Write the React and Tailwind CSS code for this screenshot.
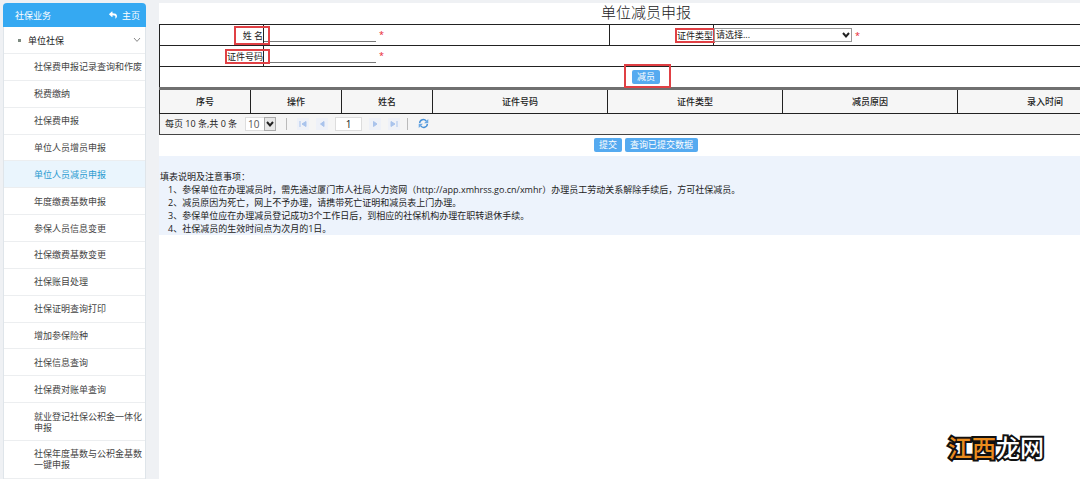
import React, { useState } from 'react';
import { FaReply } from 'react-icons/fa';

const menuItems = [
  '社保费申报记录查询和作废',
  '税费缴纳',
  '社保费申报',
  '单位人员增员申报',
  '单位人员减员申报',
  '年度缴费基数申报',
  '参保人员信息变更',
  '社保缴费基数变更',
  '社保账目处理',
  '社保证明查询打印',
  '增加参保险种',
  '社保信息查询',
  '社保费对账单查询',
  '就业登记社保公积金一体化申报',
  '社保年度基数与公积金基数一键申报',
];

const columns = ['序号', '操作', '姓名', '证件号码', '证件类型', '减员原因', '录入时间'];

const notes = [
  '1、参保单位在办理减员时，需先通过厦门市人社局人力资网（http://app.xmhrss.go.cn/xmhr）办理员工劳动关系解除手续后，方可社保减员。',
  '2、减员原因为死亡，网上不予办理，请携带死亡证明和减员表上门办理。',
  '3、参保单位应在办理减员登记成功3个工作日后，到相应的社保机构办理在职转退休手续。',
  '4、社保减员的生效时间点为次月的1日。',
];

const Chevron = ({ className }) => (
  <svg viewBox="0 0 8 6" className={className} fill="none" stroke="currentColor">
    <path d="M1 1l3 3.4L7 1" />
  </svg>
);

const Star = () => <span className="ml-[3px] text-[#e8202a]">*</span>;

const BlueButton = ({ children }) => (
  <button type="button" className="h-[14px] rounded-xs bg-[#55aaf0] px-[5px] leading-[14px] text-white">
    {children}
  </button>
);

const PageButton = ({ label, children }) => (
  <button type="button" aria-label={label} className="flex h-3 w-3 items-center justify-center bg-[#eef1f8]">
    <svg viewBox="0 0 8 8" className="h-2 w-2" fill="#a9c3ec" stroke="#a9c3ec">
      {children}
    </svg>
  </button>
);

const Sidebar = () => {
  const [active, setActive] = useState(4);

  return (
    <nav className="mt-[3px] ml-[3px] flex w-[143px] shrink-0 flex-col rounded-t-sm border-x border-[#dfe5ea] bg-white">
      <div className="-mx-px flex h-6 shrink-0 items-center justify-between rounded-t-sm bg-[#35a9f2] pr-1.5 pl-3 text-white">
        <span>社保业务</span>
        <a href="#home" className="flex items-center gap-1">
          <FaReply className="h-2 w-2.5" />
          主页
        </a>
      </div>
      <button
        type="button"
        className="flex h-[27px] shrink-0 items-center border-b border-[#eceef0] pr-1 pl-3.5 text-[#222]"
      >
        <span className="mr-[7px] h-[3px] w-[3px] bg-[#7d8a80]" />
        单位社保
        <Chevron className="ml-auto h-1.5 w-2 text-[#888]" />
      </button>
      <ul className="flex grow flex-col text-[#444]">
        {menuItems.map((item, i) => (
          <li key={item} className="flex grow">
            <a
              href="#menu"
              onClick={() => setActive(i)}
              className={
                i === active
                  ? 'flex grow items-center border-b border-[#eceef0] bg-[#eaf5fd] py-[7px] pl-[30px] leading-[11px] text-[#2a9bd0]'
                  : 'flex grow items-center border-b border-[#eceef0] py-[7px] pl-[30px] leading-[11px]'
              }
            >
              {item}
            </a>
          </li>
        ))}
      </ul>
    </nav>
  );
};

const EntryForm = () => (
  <form>
    <table className="w-full table-fixed border-collapse">
      <colgroup>
        <col className="w-[104px]" />
        <col className="w-[346px]" />
        <col className="w-[104px]" />
        <col />
      </colgroup>
      <tbody>
        <tr className="h-[21px]">
          <td className="border border-[#222] text-right">
            <label htmlFor="name" className="relative">
              姓 名
              <span className="absolute -top-[3px] -right-[7px] -bottom-[3px] -left-[9px] border-2 border-[#e04044]" />
            </label>
          </td>
          <td className="border border-[#222]">
            <input id="name" className="h-3 w-28 border-b border-[#777] align-middle outline-none" />
            <Star />
          </td>
          <td className="border border-[#222] text-right">
            <label htmlFor="idType" className="relative">
              证件类型
              <span className="absolute -top-px -right-[2px] -bottom-px -left-[2px] border-2 border-[#e04044]" />
            </label>
          </td>
          <td className="border border-[#222]">
            <div className="flex items-center">
              <div className="relative w-[138px]">
                <select
                  id="idType"
                  className="block h-[14px] w-full appearance-none border border-[#999] bg-white pl-px leading-3"
                >
                  <option>请选择...</option>
                </select>
                <Chevron className="pointer-events-none absolute top-1 right-[2px] h-1.5 w-2 stroke-2" />
              </div>
              <Star />
            </div>
          </td>
        </tr>
        <tr className="h-[21px]">
          <td className="border border-[#222] text-right">
            <label htmlFor="idNumber" className="relative">
              证件号码
              <span className="absolute -top-px -right-[7px] -bottom-px -left-[2px] border-2 border-[#e04044]" />
            </label>
          </td>
          <td colSpan={3} className="border border-[#222]">
            <input id="idNumber" className="h-3 w-28 border-b border-[#777] align-middle outline-none" />
            <Star />
          </td>
        </tr>
        <tr className="h-[21px]">
          <td colSpan={4} className="border border-b-[#707070] border-[#222] text-center">
            <div className="relative inline-block align-middle">
              <BlueButton>减员</BlueButton>
              <span className="pointer-events-none absolute -top-[6px] -right-[11px] -bottom-1 -left-2 border-2 border-[#e04044]" />
            </div>
          </td>
        </tr>
      </tbody>
    </table>
  </form>
);

const Pager = () => (
  <div className="flex h-[21px] items-center border-x border-b border-[#444] bg-[#f5f5f5] pl-[5px]">
    <span className="w-20">每页 10 条,共 0 条</span>
    <div className="relative">
      <select
        aria-label="每页条数"
        className="block h-[14px] w-[31px] appearance-none border border-[#ddd] bg-white pl-0.5 text-[10px] leading-3 text-[#555]"
      >
        <option>10</option>
      </select>
      <span className="pointer-events-none absolute top-0 right-0 flex h-[14px] w-3 items-center justify-center border border-[#aaa] bg-[#e8e8e8]">
        <Chevron className="h-1.5 w-2 stroke-2" />
      </span>
    </div>
    <span className="mx-[10px] h-3 w-px bg-[#bbb]" />
    <div className="flex items-center gap-[7px]">
      <PageButton label="首页">
        <path d="M1 1v6M7 1.5v5L3 4z" />
      </PageButton>
      <PageButton label="上一页">
        <path d="M6 1.5v5L2.5 4z" />
      </PageButton>
      <input
        aria-label="页码"
        defaultValue="1"
        className="h-[14px] w-[27px] border border-[#ddd] bg-white text-center text-[10px]"
      />
      <PageButton label="下一页">
        <path d="M2.5 1.5v5L6 4z" />
      </PageButton>
      <PageButton label="末页">
        <path d="M7 1v6M1 1.5v5L5 4z" />
      </PageButton>
    </div>
    <span className="mr-[10px] ml-[7px] h-3 w-px bg-[#bbb]" />
    <button type="button" aria-label="刷新">
      <svg viewBox="0 0 12 12" className="h-[11px] w-[11px]" fill="none" stroke="#4b93d8" strokeWidth="1.6">
        <path d="M1.8 5.5A4 4 0 0 1 9 3.4M10.2 6.5A4 4 0 0 1 3 8.6" />
        <path d="M11.2 1v4.6H6.6zM.8 11V6.4h4.6z" fill="#6aa8e4" stroke="none" />
      </svg>
    </button>
  </div>
);

const App = () => {
  return (
    <div
      lang="zh-CN"
      className="relative flex min-h-screen gap-[13px] overflow-hidden bg-[#eff1f4] font-['Open_Sans','Noto_Sans_CJK_SC',sans-serif] text-[9px] leading-[13px] text-[#222]"
    >
      <Sidebar />

      <main className="mt-[3px] min-w-0 grow overflow-x-clip bg-white">
        <div className="min-w-[974px]">
          <h1 className="h-[21px] text-center font-['Noto_Sans_CJK_SC',sans-serif] text-[15px] leading-[18px] font-light">
            单位减员申报
          </h1>
          <EntryForm />

          <div className="border-t-2 border-[#707070]">
            <table className="w-full table-fixed border-collapse bg-[#f6f6f6]">
              <colgroup>
                <col className="w-[91px]" />
                <col className="w-[91px]" />
                <col className="w-[91px]" />
                <col span={4} />
              </colgroup>
              <thead>
                <tr className="h-[23px]">
                  {columns.map((name) => (
                    <th key={name} className="border border-t-0 border-[#222] font-medium">
                      {name}
                    </th>
                  ))}
                </tr>
              </thead>
            </table>
            <Pager />
          </div>

          <div className="flex h-[21px] items-center justify-center gap-[3px]">
            <BlueButton>提交</BlueButton>
            <BlueButton>查询已提交数据</BlueButton>
          </div>

          <section className="bg-[#edf3fc] pt-[14px] pl-px">
            <h2>填表说明及注意事项：</h2>
            <div className="pl-2">
              {notes.map((note) => (
                <p key={note}>{note}</p>
              ))}
            </div>
          </section>
        </div>
      </main>

      <div className="absolute right-9 bottom-4 font-['Noto_Sans_CJK_SC',sans-serif] text-2xl leading-8 font-medium text-white [-webkit-text-stroke:4px_#111] [paint-order:stroke_fill]">
        <span className="text-[#ea8c1e]">江西</span>龙网
      </div>
    </div>
  );
};

export default App;
